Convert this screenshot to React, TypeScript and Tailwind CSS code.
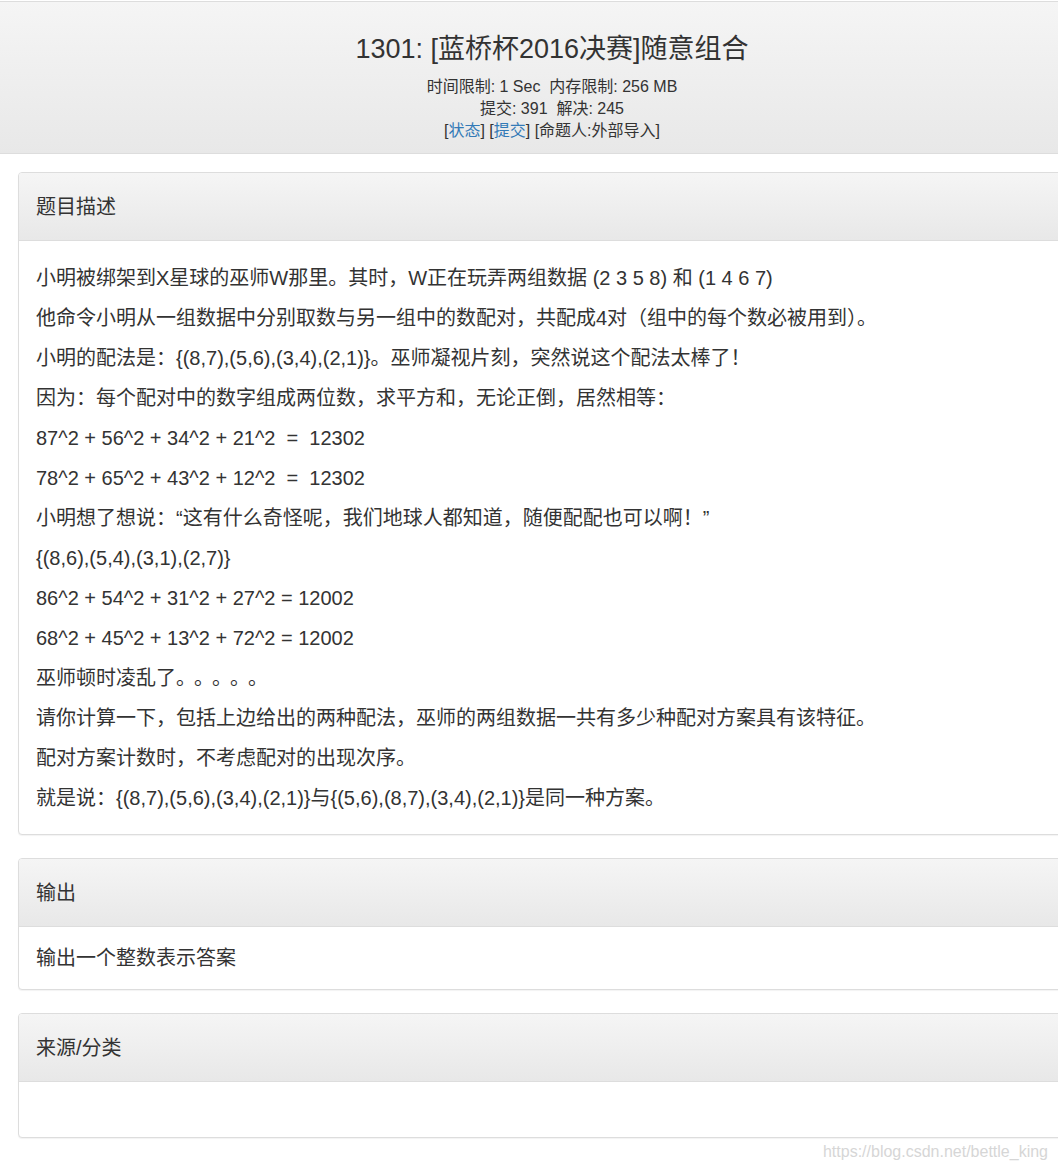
import React from 'react';

const font = { fontFamily: '"Liberation Sans", Arial, "Noto Sans CJK SC", sans-serif' };

const descLines: React.ReactNode[] = [
  '小明被绑架到X星球的巫师W那里。其时，W正在玩弄两组数据 (2 3 5 8) 和 (1 4 6 7)',
  '他命令小明从一组数据中分别取数与另一组中的数配对，共配成4对（组中的每个数必被用到）。',
  '小明的配法是：{(8,7),(5,6),(3,4),(2,1)}。巫师凝视片刻，突然说这个配法太棒了！',
  '因为：每个配对中的数字组成两位数，求平方和，无论正倒，居然相等：',
  '87^2 + 56^2 + 34^2 + 21^2  =  12302',
  '78^2 + 65^2 + 43^2 + 12^2  =  12302',
  '小明想了想说：“这有什么奇怪呢，我们地球人都知道，随便配配也可以啊！”',
  '{(8,6),(5,4),(3,1),(2,7)}',
  '86^2 + 54^2 + 31^2 + 27^2 = 12002',
  '68^2 + 45^2 + 13^2 + 72^2 = 12002',
  <>
    巫师顿时凌乱了<span className="tracking-[8px]">。。。。。</span>
  </>,
  '请你计算一下，包括上边给出的两种配法，巫师的两组数据一共有多少种配对方案具有该特征。',
  '配对方案计数时，不考虑配对的出现次序。',
  '就是说：{(8,7),(5,6),(3,4),(2,1)}与{(5,6),(8,7),(3,4),(2,1)}是同一种方案。',
];

const Panel: React.FC<{ title: string; bodyClass: string; children?: React.ReactNode }> = ({ title, bodyClass, children }) => (
  <div className="ml-[18px] w-[1100px] rounded-[4px] border border-[#dddddd] bg-white shadow-[0_1px_1px_rgba(0,0,0,0.05)]">
    <div className="h-[68px] flex items-center px-[17px] rounded-t-[3px] border-b border-[#dddddd] bg-gradient-to-b from-[#f5f5f5] to-[#e8e8e8] text-[20px] text-[#333333]">
      {title}
    </div>
    <div className={bodyClass}>{children}</div>
  </div>
);

export default function App() {
  return (
    <div className="relative w-[1058px] h-[1170px] overflow-hidden bg-white text-[#333333]" style={font}>
      <div className="w-[1104px]">
        <div className="mt-[1px] h-[153px] border-t border-b border-[#dddddd] bg-gradient-to-b from-[#f5f5f5] to-[#e8e8e8] flex flex-col items-center">
          <h1 className="mt-[29px] text-[27px] leading-[36px] text-[#333333]">1301: [蓝桥杯2016决赛]随意组合</h1>
          <div className="mt-[9px] text-[16px] leading-[22px] text-center">
            <div>时间限制: 1 Sec&nbsp;&nbsp;内存限制: 256 MB</div>
            <div>提交: 391&nbsp;&nbsp;解决: 245</div>
            <div>
              [<span className="text-[#337ab7]">状态</span>] [<span className="text-[#337ab7]">提交</span>] [命题人:外部导入]
            </div>
          </div>
        </div>
      </div>

      <div className="mt-[18px] flex flex-col gap-[23px]">
        <Panel title="题目描述" bodyClass="px-[17px] pt-[17px] pb-[16px] text-[20px] leading-[40px]">
          {descLines.map((l, i) => (
            <div key={i} className="whitespace-pre">{l}</div>
          ))}
        </Panel>
        <Panel title="输出" bodyClass="px-[17px] py-[11px] text-[20px] leading-[40px]">
          <div>输出一个整数表示答案</div>
        </Panel>
        <Panel title="来源/分类" bodyClass="h-[55px]" />
      </div>

      <div className="absolute right-[10px] top-[1141px] text-[16px] leading-[22px] text-[#d6d6d6]">
        https://blog.csdn.net/bettle_king
      </div>
    </div>
  );
}
